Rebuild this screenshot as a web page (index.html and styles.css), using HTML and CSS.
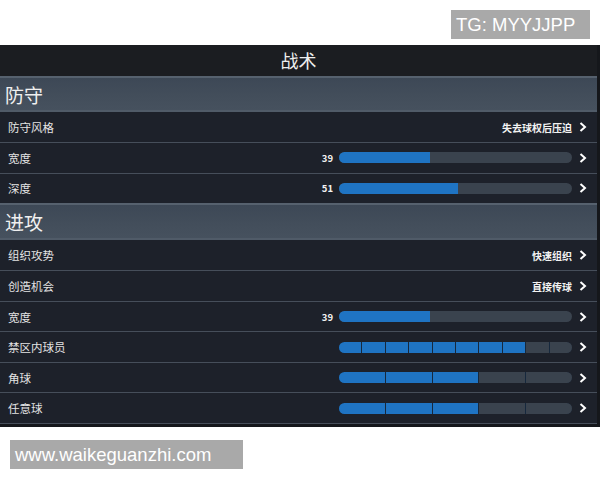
FILE: index.html
```html
<!DOCTYPE html>
<html lang="zh">
<head>
<meta charset="utf-8">
<link rel="stylesheet" href="styles.css">
</head>
<body>
<div class="top">
  <div class="mark mark-tg">TG: MYYJJPP</div>
</div>
<div class="panel">
  <div class="inner">
    <div class="title">战术</div>

    <div class="section first">防守</div>
    <div class="row r3">
      <span class="label">防守风格</span>
      <span class="right"><span class="value">失去球权后压迫</span><svg class="chev" viewBox="0 0 8 10"><polyline points="1.5,1 6,5 1.5,9"/></svg></span>
    </div>
    <div class="row r3">
      <span class="label">宽度</span>
      <span class="right"><span class="num">39</span><span class="bar"><span class="fill" style="width:39%"></span></span><svg class="chev" viewBox="0 0 8 10"><polyline points="1.5,1 6,5 1.5,9"/></svg></span>
    </div>
    <div class="row r3">
      <span class="label">深度</span>
      <span class="right"><span class="num">51</span><span class="bar"><span class="fill" style="width:51%"></span></span><svg class="chev" viewBox="0 0 8 10"><polyline points="1.5,1 6,5 1.5,9"/></svg></span>
    </div>

    <div class="section second">进攻</div>
    <div class="row">
      <span class="label">组织攻势</span>
      <span class="right"><span class="value">快速组织</span><svg class="chev" viewBox="0 0 8 10"><polyline points="1.5,1 6,5 1.5,9"/></svg></span>
    </div>
    <div class="row">
      <span class="label">创造机会</span>
      <span class="right"><span class="value">直接传球</span><svg class="chev" viewBox="0 0 8 10"><polyline points="1.5,1 6,5 1.5,9"/></svg></span>
    </div>
    <div class="row">
      <span class="label">宽度</span>
      <span class="right"><span class="num">39</span><span class="bar"><span class="fill" style="width:39%"></span></span><svg class="chev" viewBox="0 0 8 10"><polyline points="1.5,1 6,5 1.5,9"/></svg></span>
    </div>
    <div class="row">
      <span class="label">禁区内球员</span>
      <span class="right"><span class="seg">
        <i class="on"></i><i class="on"></i><i class="on"></i><i class="on"></i><i class="on"></i><i class="on"></i><i class="on"></i><i class="on"></i><i></i><i></i>
      </span><svg class="chev" viewBox="0 0 8 10"><polyline points="1.5,1 6,5 1.5,9"/></svg></span>
    </div>
    <div class="row">
      <span class="label">角球</span>
      <span class="right"><span class="seg">
        <i class="on"></i><i class="on"></i><i class="on"></i><i></i><i></i>
      </span><svg class="chev" viewBox="0 0 8 10"><polyline points="1.5,1 6,5 1.5,9"/></svg></span>
    </div>
    <div class="row">
      <span class="label">任意球</span>
      <span class="right"><span class="seg">
        <i class="on"></i><i class="on"></i><i class="on"></i><i></i><i></i>
      </span><svg class="chev" viewBox="0 0 8 10"><polyline points="1.5,1 6,5 1.5,9"/></svg></span>
    </div>
    <div class="endline"></div>
  </div>
</div>
<div class="bottom">
  <div class="mark mark-web">www.waikeguanzhi.com</div>
</div>
</body>
</html>
```

FILE: styles.css
```css
html, body {
  margin: 0;
  padding: 0;
  background: #ffffff;
}

body {
  width: 600px;
  height: 480px;
  overflow: hidden;
  font-family: "Noto Sans CJK SC", "Noto Sans", sans-serif;
}

.top {
  height: 45px;
  display: flex;
  justify-content: flex-end;
  align-items: flex-start;
}

.mark {
  background: #a9a9a9;
  color: #ffffff;
  font-family: "Liberation Sans", Arial, sans-serif;
  box-sizing: border-box;
  display: flex;
  align-items: center;
  padding-left: 5px;
}

.mark-tg {
  margin-top: 10px;
  margin-right: 10px;
  width: 139px;
  height: 29px;
  font-size: 18.5px;
}

.panel {
  height: 382px;
  background: #15171b;
  display: flex;
}

.inner {
  width: 597px;
  background: #1c2029;
  display: flex;
  flex-direction: column;
}

.title {
  height: 31px;
  background: #1b1d21;
  color: #eeeeee;
  font-size: 18px;
  line-height: 31px;
  text-align: center;
}

.section {
  box-sizing: border-box;
  background: linear-gradient(180deg, #3d4856 0%, #434e5b 60%, #46515e 100%);
  border-top: 2px solid #56616e;
  border-bottom: 2px solid #505b68;
  color: #f0f0f0;
  font-size: 19px;
  padding-left: 5px;
  display: flex;
  align-items: center;
}

.section.first {
  height: 36px;
}

.section.second {
  height: 37px;
}

.row {
  box-sizing: border-box;
  height: 30.5px;
  border-top: 1.5px solid #464e5a;
  display: flex;
  align-items: center;
  background: #1d212a;
}

.section + .row {
  border-top: none;
}

.row.r3 {
  height: 30.33px;
}

.label {
  padding-left: 8px;
  color: #e4e4e4;
  font-size: 11.5px;
}

.right {
  margin-left: auto;
  display: flex;
  align-items: center;
}

.value {
  color: #f2f2f2;
  font-size: 10px;
  font-weight: bold;
}

.num {
  color: #f2f2f2;
  font-size: 9.5px;
  font-weight: bold;
  margin-right: 6px;
}

.bar {
  width: 233px;
  height: 11px;
  border-radius: 6px;
  background: #3a434e;
  overflow: hidden;
  display: flex;
}

.fill {
  display: block;
  height: 100%;
  background: #1f74c3;
}

.seg {
  width: 233px;
  height: 11px;
  border-radius: 6px;
  overflow: hidden;
  display: flex;
  gap: 1px;
  background: #16283d;
}

.seg i {
  flex: 1;
  background: #3a434e;
}

.seg i.on {
  background: #1f74c3;
}

.chev {
  width: 8px;
  height: 10px;
  margin-left: 7px;
  margin-right: 10px;
}

.chev polyline {
  fill: none;
  stroke: #ffffff;
  stroke-width: 2;
}

.endline {
  border-top: 1.5px solid #464e5a;
  flex: 1;
  background: #15171b;
}

.bottom {
  padding-top: 13px;
  padding-left: 10px;
}

.mark-web {
  width: 233px;
  height: 29px;
  font-size: 18.5px;
}
```
